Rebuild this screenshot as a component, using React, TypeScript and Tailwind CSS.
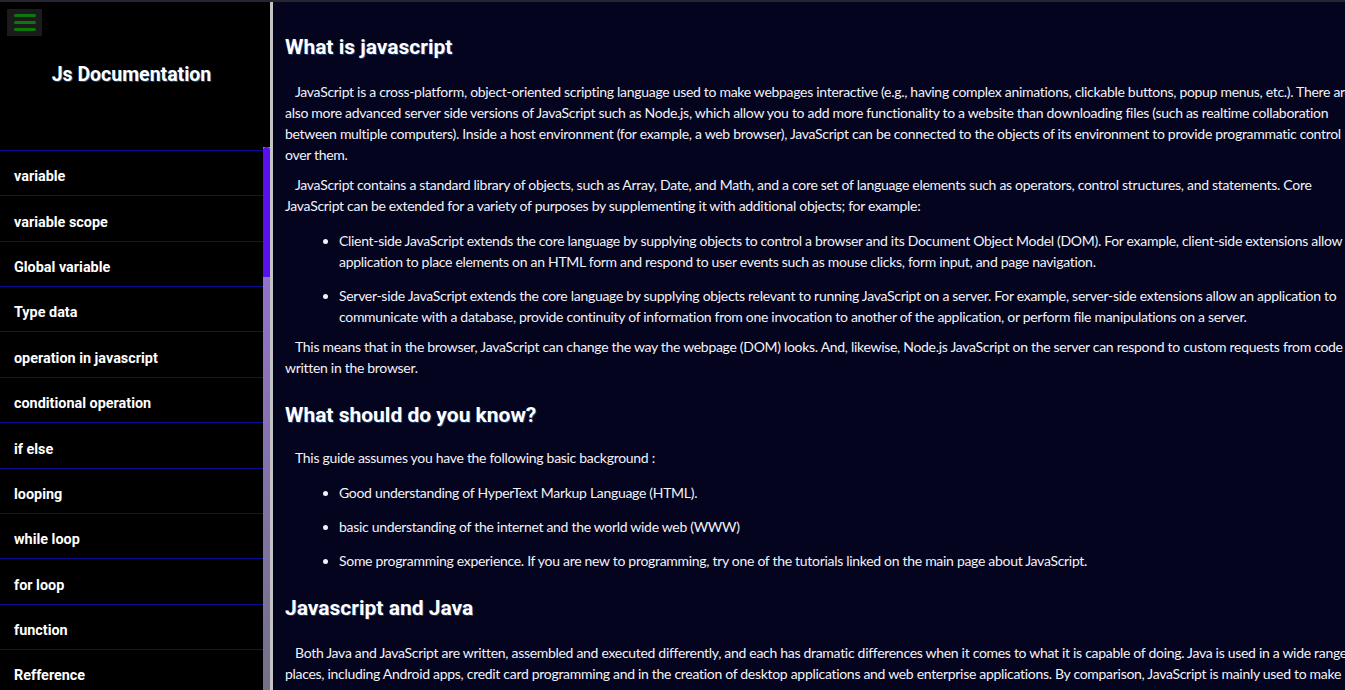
import React from "react";

const navItems = [
  "variable",
  "variable scope",
  "Global variable",
  "Type data",
  "operation in javascript",
  "conditional operation",
  "if else",
  "looping",
  "while loop",
  "for loop",
  "function",
  "Refference",
];

const bodyFont = { fontFamily: "Lato, 'Noto Sans', sans-serif" };
const headFont = { fontFamily: "Roboto, 'Noto Sans', sans-serif" };

export default function App() {
  return (
    <div className="flex h-[690px] w-[1345px] overflow-hidden border-t-2 border-[#262630] bg-[#04041e]">
      {/* Sidebar */}
      <aside className="flex h-full w-[270px] shrink-0 flex-col bg-black" style={headFont}>
        <div className="flex h-[145px] shrink-0 flex-col">
          <button className="ml-[7px] mt-[7px] flex h-[27px] w-[35px] flex-col items-center justify-center gap-[4px] bg-[#1b1b1b]">
            <span className="block h-[3px] w-[22px] rounded-full bg-[#0c780c]" />
            <span className="block h-[3px] w-[22px] rounded-full bg-[#0c780c]" />
            <span className="block h-[3px] w-[22px] rounded-full bg-[#0c780c]" />
          </button>
          <h1 className="mt-[24px] w-[263px] text-center text-[19.5px] font-bold text-white [text-shadow:1px_1px_0_rgba(80,160,255,0.45)]">
            Js Documentation
          </h1>
        </div>
        <div className="flex min-h-0 flex-1">
          <div className="w-[263px] overflow-hidden pt-[3px]">
            <nav className="border-t border-[#0a0a94]">
              {navItems.map((item) => (
                <div
                  key={item}
                  className="flex h-[45.36px] items-center border-b border-[#0a0a94] pl-[14px] pt-[8px] text-[14.4px] font-bold text-white"
                >
                  {item}
                </div>
              ))}
            </nav>
          </div>
          <div className="relative w-[7px] bg-gradient-to-b from-[#9a72e0] to-[#757088]">
            <div className="absolute left-0 top-0 h-[130px] w-[7px] rounded-t-full bg-[#5a0ff0]" />
          </div>
        </div>
      </aside>
      <div className="w-[3px] shrink-0 bg-[#c3c3c3]" />

      {/* Main */}
      <main className="shrink-0 pl-[12px] text-[#f2f2f8]">
        <div className="w-[1080px]">
          <h2 className="mt-[30px] text-[21px] font-bold text-white [text-shadow:1px_1px_0_rgba(80,160,255,0.35)]" style={headFont}>
            What is javascript
          </h2>
          <div className="text-[14px] leading-[21px] tracking-[-0.3px]" style={bodyFont}>
            <p className="mt-[17px] indent-[10px]">
              JavaScript is a cross-platform, object-oriented scripting language used to make webpages interactive (e.g., having complex animations, clickable buttons, popup menus, etc.). There are also more advanced server side versions of JavaScript such as Node.js, which allow you to add more functionality to a website than downloading files (such as realtime collaboration between multiple computers). Inside a host environment (for example, a web browser), JavaScript can be connected to the objects of its environment to provide programmatic control over them.
            </p>
            <p className="mt-[9px] indent-[10px]">
              JavaScript contains a standard library of objects, such as Array, Date, and Math, and a core set of language elements such as operators, control structures, and statements. Core JavaScript can be extended for a variety of purposes by supplementing it with additional objects; for example:
            </p>
            <ul className="mt-[14px] list-disc space-y-[13px] pl-[54px]">
              <li>
                Client-side JavaScript extends the core language by supplying objects to control a browser and its Document Object Model (DOM). For example, client-side extensions allow an application to place elements on an HTML form and respond to user events such as mouse clicks, form input, and page navigation.
              </li>
              <li>
                Server-side JavaScript extends the core language by supplying objects relevant to running JavaScript on a server. For example, server-side extensions allow an application to communicate with a database, provide continuity of information from one invocation to another of the application, or perform file manipulations on a server.
              </li>
            </ul>
            <p className="mt-[9px] indent-[10px]">
              This means that in the browser, JavaScript can change the way the webpage (DOM) looks. And, likewise, Node.js JavaScript on the server can respond to custom requests from code written in the browser.
            </p>
          </div>

          <h2 className="mt-[22px] text-[21px] font-bold text-white [text-shadow:1px_1px_0_rgba(80,160,255,0.35)]" style={headFont}>
            What should do you know?
          </h2>
          <div className="text-[14px] leading-[21px] tracking-[-0.3px]" style={bodyFont}>
            <p className="mt-[16px] indent-[10px]">This guide assumes you have the following basic background :</p>
            <ul className="mt-[14px] list-disc space-y-[13px] pl-[54px]">
              <li>Good understanding of HyperText Markup Language (HTML).</li>
              <li>basic understanding of the internet and the world wide web (WWW)</li>
              <li>Some programming experience. If you are new to programming, try one of the tutorials linked on the main page about JavaScript.</li>
            </ul>
          </div>

          <h2 className="mt-[22px] text-[21px] font-bold text-white [text-shadow:1px_1px_0_rgba(80,160,255,0.35)]" style={headFont}>
            Javascript and Java
          </h2>
          <div className="text-[14px] leading-[21px] tracking-[-0.3px]" style={bodyFont}>
            <p className="mt-[17px] indent-[10px]">
              Both Java and JavaScript are written, assembled and executed differently, and each has dramatic differences when it comes to what it is capable of doing. Java is used in a wide range of places, including Android apps, credit card programming and in the creation of desktop applications and web enterprise applications. By comparison, JavaScript is mainly used to make web pages more interactive. It can also be used to make simple games and to add functionality to web pages, such as validating forms and animating elements on the page.
            </p>
          </div>
        </div>
      </main>
    </div>
  );
}
